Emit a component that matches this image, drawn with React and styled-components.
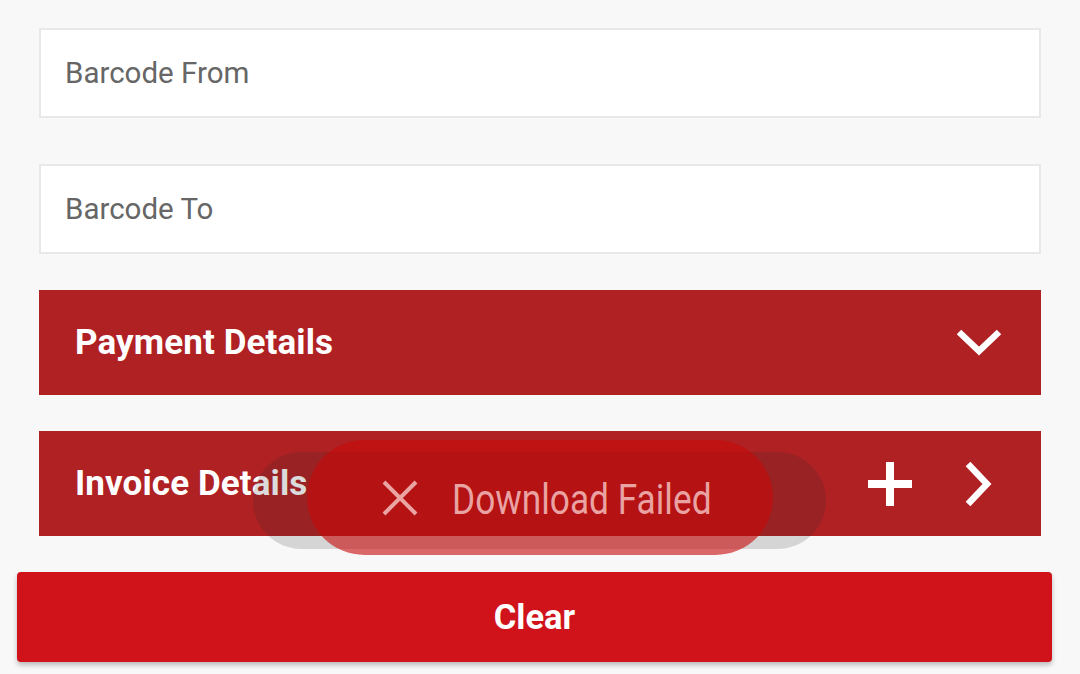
import React from 'react'
import styled, { createGlobalStyle } from 'styled-components'

const Global = createGlobalStyle`
  html, body {
    margin: 0;
    padding: 0;
    background: #f8f8f8;
    font-family: Roboto, "Noto Sans", Arial, sans-serif;
  }
`

const Page = styled.div`
  position: relative;
  width: 1080px;
  height: 674px;
  overflow: hidden;
  background: #f8f8f8;
  box-sizing: border-box;
  padding-top: 28px;
`

const Form = styled.div`
  display: flex;
  flex-direction: column;
  gap: 36px;
  margin: 0 39px;
`

const Field = styled.input`
  box-sizing: border-box;
  height: 90px;
  width: 100%;
  border: 2px solid #e8e8e8;
  background: #fff;
  padding: 0 24px;
  font-family: Roboto, sans-serif;
  font-size: 29.5px;
  color: #616161;
  outline: none;
  margin-bottom: ${p => p.$extra || 0}px;
  &::placeholder {
    color: #666;
  }
`

const Section = styled.div`
  box-sizing: border-box;
  height: 105px;
  background: #b02124;
  display: flex;
  align-items: center;
  padding: 0 ${p => p.$right}px 0 36px;
  color: #fff;
`

const SectionTitle = styled.div`
  flex: 1;
  font-size: 35px;
  font-weight: 700;
  letter-spacing: 0.1px;
`

const Icons = styled.div`
  display: flex;
  align-items: center;
  gap: ${p => p.$gap || 0}px;
`

const ClearButton = styled.button`
  display: block;
  box-sizing: border-box;
  width: 1035px;
  height: 90px;
  margin: 36px 0 0 17px;
  border: none;
  border-radius: 4px;
  background: #d0121a;
  color: #fff;
  font-family: Roboto, sans-serif;
  font-size: 34.5px;
  font-weight: 700;
  box-shadow: 0 3px 5px rgba(0, 0, 0, 0.25);
`

const ToastShadow = styled.div`
  position: absolute;
  left: 253px;
  top: 452px;
  width: 573px;
  height: 97px;
  border-radius: 49px;
  background: rgba(40, 40, 40, 0.17);
`

const Toast = styled.div`
  position: absolute;
  left: 307px;
  top: 440px;
  width: 466px;
  height: 115px;
  border-radius: 58px;
  background: rgba(200, 8, 8, 0.6);
  display: flex;
  align-items: center;
  justify-content: flex-start;
  padding-left: 75px;
  box-sizing: border-box;
  gap: 34px;
  color: rgba(255, 220, 220, 0.72);
`

const ToastText = styled.span`
  font-size: 43px;
  font-weight: 400;
  display: inline-block;
  white-space: nowrap;
  transform: scaleX(0.82);
  transform-origin: left center;
  margin-top: 2px;
`

const ChevronDown = () => (
  <svg width="48" height="32" viewBox="0 0 48 32">
    <path d="M4 5 L24 24 L44 5" fill="none" stroke="#fff" strokeWidth="6.5" />
  </svg>
)

const ChevronRight = () => (
  <svg width="32" height="48" viewBox="0 0 32 48">
    <path d="M5 4 L24 24 L5 44" fill="none" stroke="#fff" strokeWidth="6.5" />
  </svg>
)

const Plus = () => (
  <svg width="46" height="46" viewBox="0 0 46 46">
    <path d="M23 1 V45 M1 23 H45" fill="none" stroke="#fff" strokeWidth="8" />
  </svg>
)

const Cross = () => (
  <svg width="36" height="36" viewBox="0 0 36 36">
    <path d="M2 2 L34 34 M34 2 L2 34" fill="none" stroke="currentColor" strokeWidth="4" />
  </svg>
)

export default function App() {
  return (
    <Page>
      <Global />
      <Form>
        <Field placeholder="Barcode From" $extra={10} />
        <Field placeholder="Barcode To" />
        <Section $right={38}>
          <SectionTitle>Payment Details</SectionTitle>
          <Icons>
            <ChevronDown />
          </Icons>
        </Section>
        <Section $right={46}>
          <SectionTitle>Invoice Details</SectionTitle>
          <Icons $gap={50}>
            <Plus />
            <ChevronRight />
          </Icons>
        </Section>
      </Form>
      <ClearButton>Clear</ClearButton>
      <ToastShadow />
      <Toast>
        <Cross />
        <ToastText>Download Failed</ToastText>
      </Toast>
    </Page>
  )
}
